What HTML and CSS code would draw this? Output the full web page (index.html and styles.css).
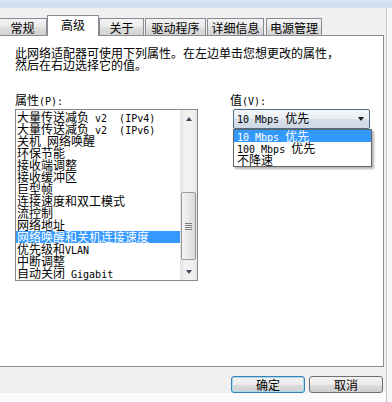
FILE: index.html
```html
<!DOCTYPE html>
<html lang="zh-CN">
<head>
<meta charset="utf-8">
<title>高级</title>
<link rel="stylesheet" href="styles.css">
</head>
<body>
<div class="window">
  <div class="titlebar"></div>
  <div class="body-row">
    <div class="main">
      <div class="tabs">
        <div class="tab t1">常规</div>
        <div class="tab active">高级</div>
        <div class="tab t3">关于</div>
        <div class="tab t4">驱动程序</div>
        <div class="tab t5">详细信息</div>
        <div class="tab t6">电源管理</div>
      </div>
      <div class="panel">
        <p class="desc">此网络适配器可使用下列属性。在左边单击您想更改的属性，<br>然后在右边选择它的值。</p>
        <div class="cols">
          <div class="col-left">
            <div class="label">属性<span class="m">(P):</span></div>
            <div class="listbox">
              <ul class="items">
                <li>大量传送减负<span class="m"> v2  (IPv4)</span></li>
                <li>大量传送减负<span class="m"> v2  (IPv6)</span></li>
                <li>关机<span class="m"> </span>网络唤醒</li>
                <li>环保节能</li>
                <li>接收端调整</li>
                <li>接收缓冲区</li>
                <li>巨型帧</li>
                <li>连接速度和双工模式</li>
                <li>流控制</li>
                <li>网络地址</li>
                <li class="sel">网络唤醒和关机连接速度</li>
                <li>优先级和<span class="m">VLAN</span></li>
                <li>中断调整</li>
                <li>自动关闭<span class="m"> Gigabit</span></li>
              </ul>
              <div class="scrollbar">
                <div class="sb-btn"><span class="tri-up"></span></div>
                <div class="sb-track">
                  <div class="thumb"><span class="grip"></span></div>
                </div>
                <div class="sb-btn"><span class="tri-down"></span></div>
              </div>
            </div>
          </div>
          <div class="col-right">
            <div class="label">值<span class="m">(V):</span></div>
            <div class="combo">
              <span class="combo-text"><span class="m">10 Mbps </span>优先</span>
              <span class="combo-arrow"></span>
              <ul class="dropdown">
                <li class="sel"><span class="m">10 Mbps </span>优先</li>
                <li><span class="m">100 Mbps </span>优先</li>
                <li>不降速</li>
              </ul>
            </div>
          </div>
        </div>
      </div>
      <div class="buttons">
        <button class="btn default">确定</button>
        <button class="btn">取消</button>
      </div>
      <div class="bottomstrip"></div>
    </div>
    <div class="rightframe"></div>
  </div>
</div>
</body>
</html>
```
FILE: styles.css
```css
* { box-sizing: border-box; margin: 0; padding: 0; }
html, body { width: 392px; height: 402px; overflow: hidden; }
body {
  font-family: "Noto Sans CJK SC", "Noto Sans", sans-serif;
  font-size: 12px;
  color: #000;
  background: #f0f0f0;
}
ul { list-style: none; }
.m {
  font-family: "DejaVu Sans Mono", "Liberation Mono", monospace;
  font-size: 10px;
  white-space: pre;
}

.window { display: flex; flex-direction: column; height: 402px; }
.titlebar {
  height: 8px;
  background: linear-gradient(#dde8f4, #cddced 60%, #d6e3f0);
}
.body-row { display: flex; flex: 1; }
.main { width: 386px; display: flex; flex-direction: column; }
.rightframe {
  width: 6px;
  border-left: 1px solid #c4c4c4;
  background: #f6f6f6;
}

/* tabs */
.tabs {
  height: 27px;
  display: flex;
  align-items: flex-end;
  margin-left: -2px;
  position: relative;
  z-index: 1;
}
.tab {
  height: 17px;
  border: 1px solid #898c95;
  border-bottom: none;
  background: linear-gradient(#f3f3f3, #ebebeb 45%, #dedede 55%, #d3d3d3);
  text-align: center;
  line-height: 16px;
  padding-top: 1px;
  white-space: nowrap;
}
.tab.t1 { width: 49px; }
.tab.active {
  width: 52px;
  height: 21px;
  margin-bottom: -1px;
  background: #fff;
  line-height: 14px;
  padding-top: 2px;
}
.tab.t3 { width: 45px; }
.tab.t4 { width: 61px; margin-left: 1px; }
.tab.t5 { width: 57px; margin-left: 1px; }
.tab.t6 { width: 56px; margin-left: 2px; }

/* panel */
.panel {
  width: 384px;
  height: 332px;
  background: #fff;
  border-top: 1px solid #898c95;
  border-right: 1px solid #898c95;
  border-bottom: 1px solid #898c95;
  padding-left: 15px;
}
.desc {
  margin-top: 11px;
  line-height: 12px;
  white-space: nowrap;
}
.cols {
  display: flex;
  margin-top: 23px;
}
.label { line-height: 12px; height: 12px; white-space: nowrap; }
.col-left { width: 183px; }
.col-right { margin-left: 32px; }

/* listbox */
.listbox {
  margin-top: 3px;
  width: 183px;
  height: 172px;
  border: 1px solid #828790;
  display: flex;
}
.items { flex: 1; padding-top: 1px; }
.items li {
  height: 12px;
  line-height: 12px;
  padding-left: 1px;
  white-space: nowrap;
}
.items li.sel { background: #3399ff; color: #fff; }

.scrollbar {
  width: 17px;
  display: flex;
  flex-direction: column;
  background: linear-gradient(90deg, #e3e3e3, #f1f1f1 30%, #f1f1f1 70%, #e6e6e6);
}
.sb-btn {
  height: 17px;
  display: flex;
  align-items: center;
  justify-content: center;
}
.tri-up, .tri-down {
  width: 0; height: 0;
  border-left: 3.5px solid transparent;
  border-right: 3.5px solid transparent;
}
.tri-up { border-bottom: 4px solid #3e4a5c; }
.tri-down { border-top: 4px solid #3e4a5c; }
.sb-track { flex: 1; }
.thumb {
  margin: 65px 1px 0;
  height: 68px;
  border: 1px solid #9a9a9a;
  border-radius: 2px;
  background: linear-gradient(90deg, #f4f4f4, #e9e9e9 50%, #d9d9d9);
  display: flex;
  align-items: center;
  justify-content: center;
}
.grip {
  width: 7px;
  height: 7px;
  background: repeating-linear-gradient(#7d7d7d 0 1px, transparent 1px 2px);
}

/* combobox */
.combo {
  position: relative;
  margin-top: 3px;
  margin-left: 3px;
  width: 137px;
  height: 20px;
  border: 1px solid #4e6c8c;
  border-radius: 2px;
  background: linear-gradient(#f5f7f9, #e8edf2 50%, #d6dfe8 51%, #cdd8e3);
  display: flex;
  align-items: center;
  padding-left: 3px;
}
.combo-text { flex: 1; line-height: 16px; white-space: nowrap; }
.combo-arrow {
  width: 0; height: 0;
  margin-right: 5px;
  border-left: 3.5px solid transparent;
  border-right: 3.5px solid transparent;
  border-top: 4px solid #1a1a1a;
}
.dropdown {
  position: absolute;
  top: 19px;
  left: -1px;
  width: 139px;
  height: 38px;
  border: 1px solid #646464;
  background: #fff;
  box-shadow: 2px 2px 2px rgba(0, 0, 0, 0.3);
  z-index: 2;
}
.dropdown li {
  height: 12px;
  line-height: 12px;
  padding-left: 3px;
  white-space: nowrap;
}
.dropdown li.sel { background: #3399ff; color: #fff; }

/* buttons */
.buttons {
  height: 26px;
  display: flex;
  justify-content: flex-end;
  align-items: flex-start;
  gap: 4px;
  padding-top: 9px;
  padding-right: 3px;
}
.btn {
  width: 74px;
  height: 17px;
  border: 1px solid #707070;
  border-radius: 3px;
  background: linear-gradient(#f2f2f2, #ebebeb 50%, #dddddd 51%, #cfcfcf);
  font-family: "Noto Sans CJK SC", sans-serif;
  font-size: 12px;
  line-height: 14px;
  color: #000;
}
.btn.default {
  border-color: #3c7fb1;
  box-shadow: inset 0 0 0 1px #a6daf2;
}
.bottomstrip { flex: 1; background: #fbfbfb; }
```
